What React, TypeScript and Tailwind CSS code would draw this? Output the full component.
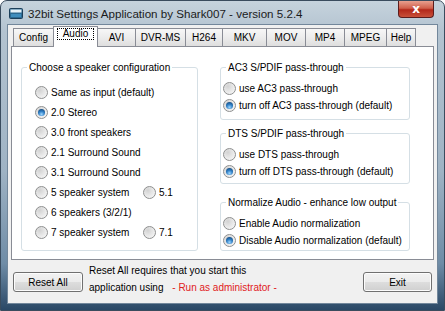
import type { ReactNode } from "react";

const tabs = [
	{ label: "Config", w: 41 },
	{ label: "Audio", w: 45, active: true },
	{ label: "AVI", w: 39 },
	{ label: "DVR-MS", w: 51 },
	{ label: "H264", w: 38 },
	{ label: "MKV", w: 45 },
	{ label: "MOV", w: 40 },
	{ label: "MP4", w: 40 },
	{ label: "MPEG", w: 43 },
	{ label: "Help", w: 30 },
];

function Radio({ checked = false }: { checked?: boolean }) {
	return (
		<span className="flex items-center justify-center w-[13px] h-[13px] shrink-0 rounded-full border border-[#8e8f8f] bg-[radial-gradient(circle_at_35%_30%,#d2d2d2_0%,#e6e6e6_45%,#fbfbfb_100%)]">
			{checked && (
				<span className="w-[7px] h-[7px] rounded-full bg-[radial-gradient(circle_at_50%_75%,#9fd8ff_0%,#2f7fc6_45%,#0f3a66_100%)]" />
			)}
		</span>
	);
}

function RadioRow({ label, checked, h = "h-[20px]" }: { label: string, checked?: boolean, h?: string }) {
	return (
		<div className={`flex items-center gap-[3px] ${h}`}>
			<Radio checked={checked} />
			<span>{label}</span>
		</div>
	);
}

function GroupBox({ title, className, children }: { title: string, className?: string, children?: ReactNode }) {
	return (
		<div className={`border border-[#d5dfe5] rounded-[3px] ${className ?? ""}`}>
			<div className="-mt-[7px] ml-[5px] w-fit px-[2px] bg-white leading-[13px]">{title}</div>
			{children}
		</div>
	);
}

function Button({ label, className }: { label: string, className?: string }) {
	return (
		<div
			className={`flex items-center justify-center h-[20px] rounded-[3px] border border-[#707070] bg-[linear-gradient(180deg,#f2f2f2_0%,#ebebeb_48%,#dddddd_52%,#cfcfcf_100%)] shadow-[inset_0_0_0_1px_#fcfcfc] ${className ?? ""}`}
		>
			{label}
		</div>
	);
}

function AppIcon() {
	return (
		<svg width="14" height="11" viewBox="0 0 14 11">
			<rect x="0.5" y="0.5" width="13" height="10" rx="1" fill="#2d6a92" stroke="#1c3f5a" />
			<rect x="1.5" y="1.5" width="11" height="3" fill="#e8f2f8" />
			<rect x="2" y="6" width="10" height="3" fill="#3f8dbd" />
		</svg>
	);
}

export default function App() {
	return (
		<div className="w-[445px] h-[311px] bg-white font-['Liberation_Sans',Arial,sans-serif] text-[10px] text-black">
			<div className="w-[445px] h-[311px] flex flex-col rounded-t-[7px] border border-[#3a4c5e] bg-[linear-gradient(180deg,#c6d3dd_0%,#b3c3d0_10%,#9fb3c4_55%,#6f8ca6_85%,#2a4866_100%)]">
				{/* title bar */}
				<div className="h-[23px] flex items-start shrink-0">
					<div className="flex items-center h-[24px] pl-[8px] gap-[5px]">
						<AppIcon />
						<span className="text-[11.6px] text-[#1b1b1b] leading-[14px] pt-[2px]">
							32bit Settings Application by Shark007 - version 5.2.4
						</span>
					</div>
					<div className="ml-auto mr-[10px] w-[36px] h-[17px] flex items-center justify-center rounded-b-[4px] border border-t-0 border-[#5b1d1d] bg-[linear-gradient(180deg,#e8a08f_0%,#d0604c_45%,#b3281a_55%,#c8503a_100%)] text-white font-bold text-[12px] leading-none font-['DejaVu_Sans',sans-serif]">
						x
					</div>
				</div>

				{/* client area */}
				<div className="mx-[6px] h-[280px] border border-[#72879b] bg-[#f0f0f0] flex flex-col">
					{/* tab strip */}
					<div className="flex items-end h-[20px] mt-[1px] ml-[5px]">
						{tabs.map((t, i) =>
							t.active ? (
								<div
									key={t.label}
									style={{ width: t.w }}
									className="relative z-10 -ml-px h-[21px] -mb-px flex justify-center pt-[1px] border border-b-0 border-[#898c95] bg-white"
								>
									<span className="h-[12px] leading-[10px] px-[5px] border border-dotted border-black">{t.label}</span>
								</div>
							) : (
								<div
									key={t.label}
									style={{ width: t.w }}
									className={`h-[18px] flex items-center justify-center border border-b-0 border-[#898c95] bg-[linear-gradient(180deg,#f7f7f7_0%,#ececec_50%,#dedede_100%)] ${i === 0 ? "" : "-ml-px"}`}
								>
									{t.label}
								</div>
							),
						)}
					</div>

					{/* tab page */}
					<div className="mx-[3px] h-[214px] border border-[#898c95] bg-white flex items-start pt-[20px]">
						<GroupBox title="Choose a speaker configuration" className="ml-[9px] w-[177px] h-[184px]">
							<div className="pt-[8px] pl-[13px]">
								<RadioRow label="Same as input (default)" />
								<RadioRow label="2.0 Stereo" checked />
								<RadioRow label="3.0 front speakers" />
								<RadioRow label="2.1 Surround Sound" />
								<RadioRow label="3.1 Surround Sound" />
								<div className="flex items-center">
									<div className="w-[108px]">
										<RadioRow label="5 speaker system" />
									</div>
									<RadioRow label="5.1" />
								</div>
								<RadioRow label="6 speakers (3/2/1)" />
								<div className="flex items-center">
									<div className="w-[108px]">
										<RadioRow label="7 speaker system" />
									</div>
									<RadioRow label="7.1" />
								</div>
							</div>
						</GroupBox>

						<div className="ml-[22px] w-[190px] flex flex-col">
							<GroupBox title="AC3 S/PDIF pass-through" className="h-[53px]">
								<div className="pt-[6px] pl-[2px]">
									<RadioRow h="h-[17px]" label="use AC3 pass-through" />
									<RadioRow h="h-[17px]" label="turn off AC3 pass-through (default)" checked />
								</div>
							</GroupBox>
							<GroupBox title="DTS S/PDIF pass-through" className="mt-[13px] h-[51px]">
								<div className="pt-[6px] pl-[2px]">
									<RadioRow h="h-[17px]" label="use DTS pass-through" />
									<RadioRow h="h-[17px]" label="turn off DTS pass-through (default)" checked />
								</div>
							</GroupBox>
							<GroupBox title="Normalize Audio - enhance low output" className="mt-[18px] h-[49px]">
								<div className="pt-[6px] pl-[2px]">
									<RadioRow h="h-[17px]" label="Enable Audio normalization" />
									<RadioRow h="h-[17px]" label="Disable Audio normalization (default)" checked />
								</div>
							</GroupBox>
						</div>
					</div>

					{/* bottom bar */}
					<div className="flex items-start flex-1">
						<Button label="Reset All" className="mt-[12px] ml-[5px] w-[70px]" />
						<div className="ml-[6px] mt-[2px] leading-[17px]">
							<div>Reset All requires that you start this</div>
							<div>
								application using <span className="ml-[6px] text-[#e0201c]">- Run as administrator -</span>
							</div>
						</div>
						<Button label="Exit" className="mt-[12px] ml-auto mr-[5px] w-[69px]" />
					</div>
				</div>
			</div>
		</div>
	);
}
